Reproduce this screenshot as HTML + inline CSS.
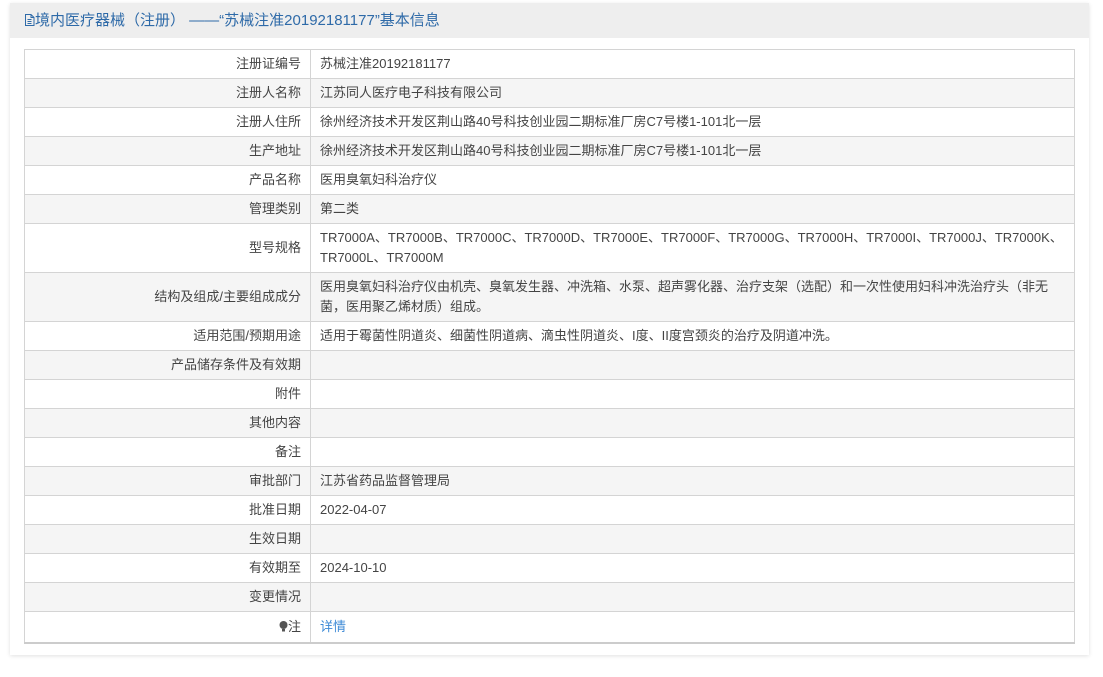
<!DOCTYPE html>
<html><head><meta charset="utf-8"><style>
body{margin:0;background:#fff;font-family:"Liberation Sans","Noto Sans CJK SC",sans-serif;}
.panel{position:absolute;left:10px;top:3px;width:1079px;height:652px;background:#fff;box-shadow:0 1px 4px rgba(0,0,0,.12);}
.hd{height:35px;background:#eeeeee;color:#2e6aa8;font-size:15px;line-height:35px;padding-left:14px;white-space:nowrap;}
table{position:absolute;left:14px;top:46px;width:1051px;border-collapse:collapse;font-size:13px;color:#444;border-bottom:2px solid #ccc;table-layout:fixed;}
td{border:1px solid #d4d4d4;padding:0 9px;height:28px;line-height:20px;word-break:break-all;}
td.l{width:267px;text-align:right;}
tr:nth-child(even){background:#f5f5f5;}
td.t{padding-top:4px;padding-bottom:4px;height:40px;}
a{color:#3d8ad6;text-decoration:none;}
</style></head><body>
<div class="panel">
<div class="hd"><svg width="11" height="12" viewBox="0 0 11 12" style="vertical-align:-1px"><path d="M1.5 0.5h5.5l3 3v8h-8.5z M7 .5v3h3 M3.5 5.5h4 M3.5 7.5h4 M3.5 9.5h4" fill="none" stroke="#2e6aa8"/></svg>境内医疗器械（注册） ——“苏械注准20192181177”基本信息</div>
<table>
<tr><td class="l">注册证编号</td><td>苏械注准20192181177</td></tr>
<tr><td class="l">注册人名称</td><td>江苏同人医疗电子科技有限公司</td></tr>
<tr><td class="l">注册人住所</td><td>徐州经济技术开发区荆山路40号科技创业园二期标准厂房C7号楼1-101北一层</td></tr>
<tr><td class="l">生产地址</td><td>徐州经济技术开发区荆山路40号科技创业园二期标准厂房C7号楼1-101北一层</td></tr>
<tr><td class="l">产品名称</td><td>医用臭氧妇科治疗仪</td></tr>
<tr><td class="l">管理类别</td><td>第二类</td></tr>
<tr><td class="l">型号规格</td><td class="t">TR7000A、TR7000B、TR7000C、TR7000D、TR7000E、TR7000F、TR7000G、TR7000H、TR7000I、TR7000J、TR7000K、TR7000L、TR7000M</td></tr>
<tr><td class="l">结构及组成/主要组成成分</td><td class="t">医用臭氧妇科治疗仪由机壳、臭氧发生器、冲洗箱、水泵、超声雾化器、治疗支架（选配）和一次性使用妇科冲洗治疗头（非无菌，医用聚乙烯材质）组成。</td></tr>
<tr><td class="l">适用范围/预期用途</td><td>适用于霉菌性阴道炎、细菌性阴道病、滴虫性阴道炎、I度、II度宫颈炎的治疗及阴道冲洗。</td></tr>
<tr><td class="l">产品储存条件及有效期</td><td></td></tr>
<tr><td class="l">附件</td><td></td></tr>
<tr><td class="l">其他内容</td><td></td></tr>
<tr><td class="l">备注</td><td></td></tr>
<tr><td class="l">审批部门</td><td>江苏省药品监督管理局</td></tr>
<tr><td class="l">批准日期</td><td>2022-04-07</td></tr>
<tr><td class="l">生效日期</td><td></td></tr>
<tr><td class="l">有效期至</td><td>2024-10-10</td></tr>
<tr><td class="l">变更情况</td><td></td></tr>
<tr><td class="l" style="height:30px"><svg width="9" height="11" viewBox="0 0 9 11" style="vertical-align:-1px"><circle cx="4.5" cy="4" r="4" fill="#555"/><rect x="3" y="8" width="3" height="2.5" fill="#555"/></svg>注</td><td><a>详情</a></td></tr>
</table>
</div>
</body></html>
